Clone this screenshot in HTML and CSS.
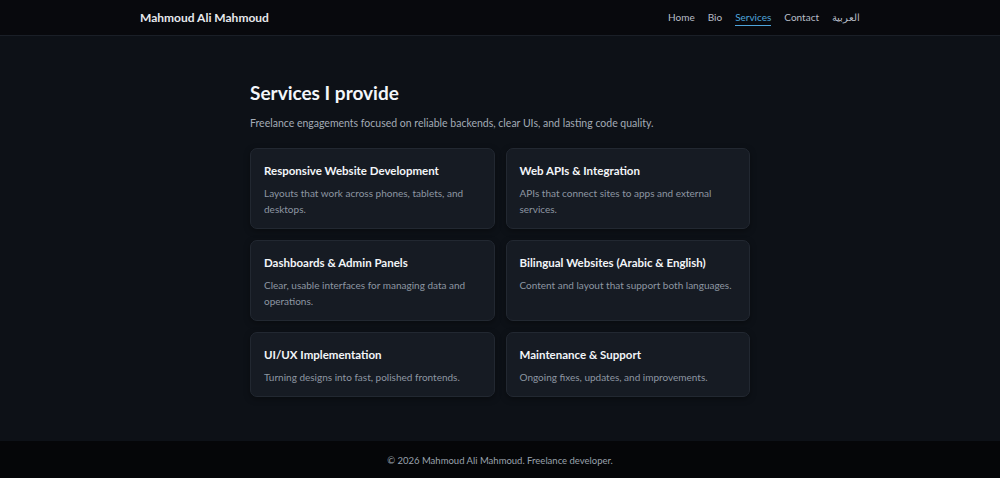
FILE: index.html
```html
<!DOCTYPE html>
<html lang="en">
<head>
<meta charset="utf-8">
<title>Services — Mahmoud Ali Mahmoud</title>
<link rel="stylesheet" href="styles.css">
</head>
<body>
<header class="site-header">
  <div class="header-inner">
    <a class="brand" href="#">Mahmoud Ali Mahmoud</a>
    <nav class="nav">
      <a href="#">Home</a>
      <a href="#">Bio</a>
      <a href="#" class="active">Services</a>
      <a href="#">Contact</a>
      <a href="#" lang="ar">العربية</a>
    </nav>
  </div>
</header>
<main class="main">
  <section class="services">
    <h1 class="title">Services I provide</h1>
    <p class="lead">Freelance engagements focused on reliable backends, clear UIs, and lasting code quality.</p>
    <div class="grid">
      <article class="card">
        <h2>Responsive Website Development</h2>
        <p>Layouts that work across phones, tablets, and desktops.</p>
      </article>
      <article class="card">
        <h2>Web APIs &amp; Integration</h2>
        <p>APIs that connect sites to apps and external services.</p>
      </article>
      <article class="card">
        <h2>Dashboards &amp; Admin Panels</h2>
        <p>Clear, usable interfaces for managing data and operations.</p>
      </article>
      <article class="card">
        <h2>Bilingual Websites (Arabic &amp; English)</h2>
        <p>Content and layout that support both languages.</p>
      </article>
      <article class="card">
        <h2>UI/UX Implementation</h2>
        <p>Turning designs into fast, polished frontends.</p>
      </article>
      <article class="card">
        <h2>Maintenance &amp; Support</h2>
        <p>Ongoing fixes, updates, and improvements.</p>
      </article>
    </div>
  </section>
</main>
<footer class="site-footer">
  <p>© 2026 Mahmoud Ali Mahmoud. Freelance developer.</p>
</footer>
</body>
</html>
```
FILE: styles.css
```css
* { box-sizing: border-box; }
html, body { margin: 0; padding: 0; }
body {
  font-family: "Lato", "Noto Sans", sans-serif;
  background: #0d1117;
  color: #e6edf3;
  min-height: 100vh;
  display: flex;
  flex-direction: column;
}
a { text-decoration: none; color: inherit; }

.site-header {
  background: #08090d;
  border-bottom: 1px solid #1a1f27;
}
.header-inner {
  width: 720px;
  margin: 0 auto;
  height: 35px;
  display: flex;
  align-items: center;
  justify-content: space-between;
}
.brand {
  font-weight: 700;
  font-size: 12px;
  color: #e6e8ec;
}
.nav {
  display: flex;
  gap: 13px;
  font-size: 10px;
}
.nav a { color: #b8bec8; padding: 2px 0; }
.nav a.active {
  color: #4ea5dc;
  border-bottom: 1px solid #4ea5dc;
}

.main {
  flex: 1;
  padding: 45px 0 44px;
}
.services {
  width: 500px;
  margin: 0 auto;
}
.title {
  margin: 0;
  font-size: 19px;
  line-height: 24px;
  font-weight: 700;
  color: #f3f6fa;
}
.lead {
  margin: 10px 0 0;
  font-size: 10.5px;
  line-height: 16px;
  color: #a3abb6;
}
.grid {
  margin-top: 17px;
  display: grid;
  grid-template-columns: 1fr 1fr;
  gap: 11px;
}
.card {
  background: #161b23;
  border: 1px solid #222831;
  border-radius: 7px;
  padding: 14px 13px 11px;
  box-shadow: 0 2px 6px rgba(0,0,0,0.35);
}
.card h2 {
  margin: 0;
  font-size: 11.5px;
  line-height: 16px;
  font-weight: 700;
  color: #f2f5f8;
}
.card p {
  margin: 6px 0 0;
  font-size: 10px;
  line-height: 16px;
  color: #8d96a2;
}

.site-footer {
  background: #050608;
  height: 38px;
  flex: none;
  display: flex;
  align-items: center;
  justify-content: center;
}
.site-footer p {
  margin: 0;
  font-size: 9.5px;
  color: #9aa2ad;
}
```
